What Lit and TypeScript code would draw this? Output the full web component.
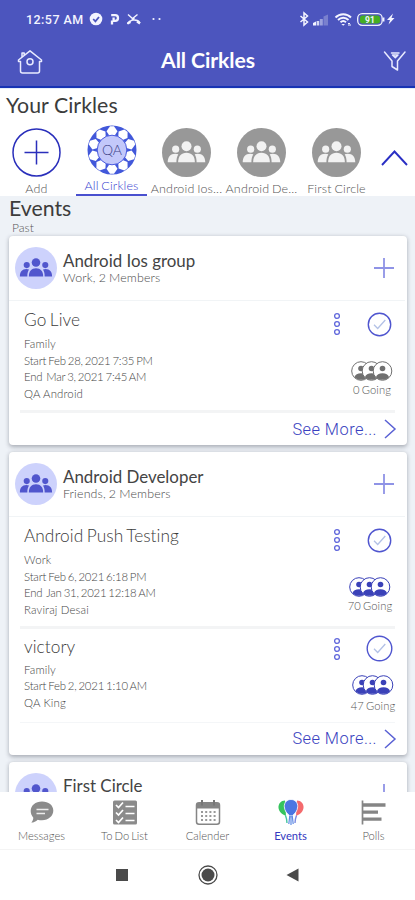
import { LitElement, html, css, svg, nothing } from "lit";
import { customElement, property } from "lit/decorators.js";
import { classMap } from "lit/directives/class-map.js";

interface CirkleEvent {
  title: string;
  category: string;
  start: string;
  end?: string;
  owner: string;
  going: number;
  tone?: string;
}

interface Group {
  name: string;
  info: string;
  events: CirkleEvent[];
}

const groups: Group[] = [
  {
    name: "Android Ios group",
    info: "Work, 2 Members",
    events: [
      { title: "Go Live", category: "Family", start: "Feb 28, 2021 7:35 PM", end: "Mar 3, 2021 7:45 AM", owner: "QA Android", going: 0, tone: "none" },
    ],
  },
  {
    name: "Android Developer",
    info: "Friends, 2 Members",
    events: [
      { title: "Android Push Testing", category: "Work", start: "Feb 6, 2021 6:18 PM", end: "Jan 31, 2021 12:18 AM", owner: "Raviraj Desai", going: 70, tone: "many" },
      { title: "victory", category: "Family", start: "Feb 2, 2021 1:10 AM", owner: "QA King", going: 47, tone: "short" },
    ],
  },
  { name: "First Circle", info: "", events: [] },
];

const people = svg`
  <circle cx="24" cy="17.8" r="4.9"/>
  <circle cx="13.4" cy="20.7" r="3.5"/>
  <circle cx="34.6" cy="20.7" r="3.5"/>
  <path d="M15.8 33.6c0-6 3-9.4 8.2-9.4s8.2 3.4 8.2 9.4z"/>
  <path d="M5.6 33.6c0-5.2 2.6-8.4 7.4-8.4 1.2 0 2.2.2 3 .6-1.3 2-1.9 4.6-1.9 7.8z"/>
  <path d="M42.4 33.6c0-5.2-2.6-8.4-7.4-8.4-1.2 0-2.2.2-3 .6 1.3 2 1.9 4.6 1.9 7.8z"/>`;

@customElement("status-bar")
export class StatusBar extends LitElement {
  static styles = css`
    :host { display: flex; height: 38px; align-items: center; padding: 0 16px 0 26px; color: #f3f4ff; font: 500 12.5px Roboto, sans-serif; }
    .time { letter-spacing: 0.45px; margin-right: 5px; }
    .grow { flex: 1; }
    svg { display: block; }
  `;
  render() {
    return html`
      <span class="time">12:57 AM</span>
      <svg width="80" height="16" viewBox="0 0 80 16" fill="none" stroke="#f3f4ff">
        <circle cx="7" cy="8" r="6.3" fill="#f3f4ff" stroke="none"/>
        <path d="M4.2 8l2.2 2.3L10 6" stroke="#4c55be" stroke-width="1.8"/>
        <path d="M23 13.5V9.500M22.200 4.200h4a2.700 2.700 0 0 1 0 5.600h-1.600V6.500" stroke-width="2.300"/>
        <path d="M39 3.500l4.500 4 5-4M38.500 13c1.500-4.500 10-5.500 12.500-1M45.500 7l-5 4" stroke-width="1.400"/>
        <path d="M38.500 12.500l3-1.500M48 10.500l3 2" stroke-width="2.200"/>
        <circle cx="64.500" cy="8" r="1.100" fill="#f3f4ff" stroke="none"/>
        <circle cx="70.500" cy="8" r="1.100" fill="#f3f4ff" stroke="none"/>
      </svg>
      <span class="grow"></span>
      <svg width="100" height="16" viewBox="0 0 100 16" fill="none" stroke="#f3f4ff">
        <path d="M1.500 5l7 6L5 14V2l3.500 3-7 6" stroke-width="1.500"/>
        <path d="M14 14.500v-2.500l3-1.500v4z" fill="#f3f4ff" stroke="none"/>
        <path d="M17.600 10h2.600v4.500h-2.600z" fill="#d5d8f5" stroke="none"/>
        <path d="M20.800 8h3v6.500h-3z" fill="#9ba1dd" stroke="none"/>
        <path d="M24.500 5.500l4.500-2v11h-4.500z" fill="#7980ce" stroke="none"/>
        <path d="M36.500 6.500c4.200-4.300 11.300-4.300 15.500 0M39 9c3-3 7.500-3 10.500 0M41.500 11.300c1.600-1.500 3.900-1.500 5.500 0" stroke-width="1.900"/>
        <path d="M44.200 14.800l-1.800-1.900h3.600z" fill="#f3f4ff" stroke="none"/>
        <path d="M49 12.500h2M49 14h3" stroke-width="1"/>
        <rect x="58.700" y="2.700" width="24.500" height="11.600" rx="4.500" stroke-width="1.300"/>
        <rect x="61" y="4.500" width="20" height="8" rx="2.500" fill="#45ae23" stroke="none"/>
        <path d="M84.700 6.500v4" stroke-width="1.500"/>
        <text x="71" y="11.600" text-anchor="middle" font-size="8.500" font-weight="700" fill="#f3f4ff" stroke="none">91</text>
        <path d="M94 2.500l-6 6.500h3l-1.500 4.500 6-6.500h-3z" fill="#f3f4ff" stroke="none"/>
      </svg>`;
  }
}

@customElement("title-bar")
export class TitleBar extends LitElement {
  static styles = css`
    :host { display: flex; height: 48px; align-items: center; justify-content: space-between; padding: 0 8px 0 17px; border-bottom: 2px solid #1733b4; color: #fff; font: 700 21.2px Lato, sans-serif; }
    svg { display: block; fill: none; stroke: #e9ebff; stroke-width: 1.5; }
    h1 { font: inherit; margin: 0 0 4px -10px; letter-spacing: -0.1px; }
    .funnel { margin-top: -3px; }
  `;
  render() {
    return html`
      <svg width="26" height="26" viewBox="0 0 26 26" stroke-linejoin="round" stroke-linecap="round">
        <path d="M1.500 11L13 1.800 24.500 11M1.500 11v1.500h2V22a2 2 0 0 0 2 2h15a2 2 0 0 0 2-2v-9.500h2V11M5 8V4h2.200v2.300"/>
        <circle cx="13" cy="12.700" r="3"/>
      </svg>
      <h1>All Cirkles</h1>
      <svg class="funnel" width="24" height="24" viewBox="0 0 24 24" stroke-linejoin="round" stroke-linecap="round">
        <path d="M1.500 3l7.500 9v5.500l5.500 3.500v-9L22 3M9.500 6h5.500l-2.700 2.600zM8.500 4h7.500"/>
      </svg>`;
  }
}

@customElement("cirkle-strip")
export class CirkleStrip extends LitElement {
  static styles = css`
    :host { display: block; height: 107px; background: #fff; font-family: Lato, sans-serif; overflow: hidden; }
    h2 { margin: 0; padding: 3px 0 0 6px; height: 29px; font-size: 21.3px; line-height: 26px; font-weight: 400; color: #3c3c3c; white-space: nowrap; letter-spacing: 0.05px; }
    .row { display: flex; margin-left: -1px; }
    .item { width: 75px; flex: none; height: 75px; display: flex; flex-direction: column; align-items: center; padding-top: 7px; box-sizing: border-box; }
    .item svg { display: block; flex: none; }
    .label { font-size: 12.5px; line-height: 16px; margin-top: 4px; color: #555; font-weight: 300; white-space: nowrap; letter-spacing: 0.15px; word-spacing: -0.8px; }
    .active { padding-top: 4px; height: 74px; }
    .active .label { color: #353dcf; width: 71px; text-align: center; height: 18px; border-bottom: 2px solid #4950cf; box-sizing: content-box; margin-top: 3px; }
    .up { margin: 28px 0 0 5px; display: block; }
    text { font-family: Lato, sans-serif; font-weight: 300; }
  `;
  private item(label: string) {
    return html`<div class="item">
      <svg width="49" height="49" viewBox="0 0 48 48"><circle cx="24" cy="24" r="24" fill="#989898"/><g fill="#f2f2f2">${people}</g></svg>
      <span class="label">${label}</span>
    </div>`;
  }
  render() {
    const spots = Array.from({ length: 10 }, (_, i) => i * 36);
    return html`
      <h2>Your Cirkles</h2>
      <div class="row">
        <div class="item">
          <svg width="49" height="49" viewBox="0 0 49 49" fill="none" stroke="#2a2fbb" stroke-width="1.500">
            <circle cx="24.500" cy="24.500" r="23.500"/><path d="M24.500 12.500v24M12.500 24.500h24"/>
          </svg>
          <span class="label">Add</span>
        </div>
        <div class="item active">
          <svg width="50" height="50" viewBox="0 0 50 50">
            <circle cx="25" cy="25" r="24.500" fill="#4258da"/>
            ${spots.map((a) => svg`<path d="M23 1.200h4l3.500 5-2.800 4.400h-5.400l-2.800-4.400z" fill="#fff" transform="rotate(${a} 25 25)"/>`)}
            <circle cx="25" cy="25" r="14.800" fill="#c3c8fa" stroke="#4d5de0"/>
            <text x="25" y="30" text-anchor="middle" font-size="14" fill="#3f4488">QA</text>
          </svg>
          <span class="label">All Cirkles</span>
        </div>
        ${["Android Ios...", "Android De...", "First Circle"].map((l) => this.item(l))}
        <svg class="up" width="30" height="18" viewBox="0 0 30 18" fill="none" stroke="#2a2fc4" stroke-width="1.900"><path d="M3 16L15.500 2.500 28 16"/></svg>
      </div>`;
  }
}

@customElement("event-row")
export class EventRow extends LitElement {
  static properties = { event: { attribute: false } };
  declare event: CirkleEvent;
  static styles = css`
    :host { display: block; font-family: Lato, sans-serif; }
    .row { display: flex; justify-content: space-between; height: 109px; padding: 8px 0 0 15px; box-sizing: border-box; }
    .title { font-size: 17.3px; line-height: 22px; height: 27px; color: #3c3c3c; font-weight: 300; letter-spacing: 0.05px; word-spacing: -1.2px; }
    .line { font-size: 11.4px; line-height: 16.6px; color: #444; font-weight: 300; white-space: pre; letter-spacing: 0.15px; }
    .date { letter-spacing: -0.2px; word-spacing: -0.9px; }
    .short { height: 92.5px; padding-top: 7px; }
    .short .title { height: 25.5px; }
    .side { width: 75px; display: flex; flex-direction: column; }
    .actions { display: flex; justify-content: space-between; align-items: center; height: 26px; padding: 2px 14px 0 0; }
    .short .actions { padding-top: 0; margin-top: -0.5px; }
    svg { display: block; }
    .dots { margin-left: 1px; }
    .going { display: flex; flex-direction: column; align-items: center; width: 46px; margin: 24px 0 0 17px; align-self: flex-start; }
    .many .going { margin-left: 15px; }
    .short .going { margin: 13px 0 0 18px; }
    .count { font-size: 11.2px; line-height: 14px; margin-top: 2px; color: #555; font-weight: 300; letter-spacing: 0.1px; word-spacing: -1px; white-space: nowrap; }
    .short .count { margin-top: 4px; }
  `;
  render() {
    const e = this.event;
    const c = e.going ? "#3a41b8" : "#707070";
    const r = e.tone === "short" ? 12.3 : 11.2;
    return html`<div class=${classMap({ row: true, [e.tone ?? "none"]: true })}>
      <div>
        <div class="title">${e.title}</div>
        <div class="line">${e.category}</div>
        <div class="line date">Start ${e.start}</div>
        ${e.end ? html`<div class="line date">End  ${e.end}</div>` : nothing}
        <div class="line">${e.owner}</div>
      </div>
      <div class="side">
        <div class="actions">
          <svg class="dots" width="8" height="24" viewBox="0 0 8 24" fill="none" stroke="#6168dc" stroke-width="1.300">
            <circle cx="4" cy="4" r="2.400"/><circle cx="4" cy="12" r="2.400"/><circle cx="4" cy="20" r="2.400"/>
          </svg>
          <svg width="27" height="27" viewBox="0 0 27 27" fill="none">
            <circle cx="13.500" cy="13.500" r=${r} stroke="#4f55cf" stroke-width="1.400"/>
            <path d="M8 13.800l3.700 3.700 7.600-8.500" stroke="#b3c1e6" stroke-width="1.300"/>
          </svg>
        </div>
        <div class="going">
          <svg width="42" height="20" viewBox="0 0 42 20">
            ${[10, 20.5, 31.5].map((x) => svg`
              <circle cx=${x} cy="10" r="9.300" fill="#fff" stroke=${c}/>
              <circle cx=${x} cy="7.500" r="2.800" fill=${c}/>
              <path d="M${x - 6.6} 16.200c.8-2.800 3.200-4 6.600-4s5.800 1.200 6.600 4c-3.600 3.400-9.600 3.400-13.200 0z" fill=${c}/>`)}
          </svg>
          <span class="count">${e.going} Going</span>
        </div>
      </div>
    </div>`;
  }
}

@customElement("group-card")
export class GroupCard extends LitElement {
  @property({ attribute: false }) declare group: Group;
  static styles = css`
    :host { display: block; flex: none; background: #fff; border-radius: 4px; box-shadow: 0 1.5px 4px rgba(60, 65, 80, 0.4); font-family: Lato, sans-serif; }
    .head { display: flex; align-items: center; height: 64px; padding: 0 11px 0 6px; border-bottom: 1px solid #f1f4f6; margin: 0 2px 0 0; }
    .text { flex: 1; margin-left: 6px; }
    .name { font-size: 16.9px; line-height: 20px; color: #444; white-space: nowrap; }
    .info { font-size: 12.4px; line-height: 14px; height: 14px; color: #4a4a4a; font-weight: 300; letter-spacing: 0.15px; word-spacing: -0.5px; margin-bottom: 1px; }
    svg { display: block; }
    .plus { margin-right: -1px; }
    .rule { height: 3px; background: #f3f4f5; margin: 0 12px 0 11px; }
    .rule.thin { height: 1px; background: #f4f6f8; }
    .more { display: flex; align-items: center; justify-content: flex-end; height: 32px; padding-right: 10px; gap: 6px; color: #3a3fc0; font: 300 16.4px Roboto, sans-serif; letter-spacing: 0.45px; }
  `;
  render() {
    const g = this.group;
    return html`
      <div class="head">
        <svg width="42" height="42" viewBox="0 0 48 48"><circle cx="24" cy="24" r="24" fill="#cdd2fc"/><g fill="#5156cd">${people}</g></svg>
        <div class="text"><div class="name">${g.name}</div><div class="info">${g.info}</div></div>
        <svg class="plus" width="22" height="22" viewBox="0 0 22 22" stroke="#8f93e6" stroke-width="1.800"><path d="M11 1v20M1 11h20"/></svg>
      </div>
      ${g.events.map((e, i) => html`<event-row .event=${e}></event-row>
        <div class=${classMap({ rule: true, thin: i > 0 })}></div>`)}
      ${g.events.length ? html`<div class="more">See More...
        <svg width="14" height="20" viewBox="0 0 14 20" fill="none" stroke="#5a61d4" stroke-width="1.500"><path d="M2 1l10 9L2 19"/></svg></div>` : nothing}`;
  }
}

@customElement("tab-bar")
export class TabBar extends LitElement {
  static styles = css`
    :host { display: flex; height: 58px; background: #fff; border-bottom: 1px solid #f4f4f4; font-family: Lato, sans-serif; box-sizing: border-box; }
    .tab { width: 83px; display: flex; flex-direction: column; align-items: center; padding-top: 7px; color: #555; font-weight: 300; font-size: 11.2px; line-height: 14px; gap: 2px; word-spacing: -1px; }
    .tab svg { display: block; width: 28px; height: 28px; }
    .on { color: #3339c0; font-weight: 400; }
  `;
  render() {
    return html`
      <div class="tab"><svg viewBox="0 0 28 28"><path d="M14 2.500c6.600 0 11.300 3.800 11.300 9S20.600 21.300 14 21.300c-1.600 0-3-.2-4.300-.6-1.800 1.600-4 2.900-6.400 2.900 1.300-1.500 2-3 2-4.900C3.600 16.600 2.700 14.200 2.700 12 2.700 6.500 7.400 2.500 14 2.500z" fill="#8b8b8b"/><path d="M8.500 10.500h12M8.500 14.500h8.500" stroke="#ededed" stroke-width="1.600"/></svg>Messages</div>
      <div class="tab"><svg viewBox="0 0 28 28"><rect x="2" y="1.500" width="24" height="24" rx="1.500" fill="#8b8b8b"/><path d="M5 6l2.500 2.500L12 3.500M5 13.500l2.500 2.500 4.500-5M5 21l2.500 2.500 4.500-5M14.500 7.500h9M14.500 14.500h9M14.500 21.500h9" fill="none" stroke="#fff" stroke-width="1.700"/></svg>To Do List</div>
      <div class="tab"><svg viewBox="0 0 28 28"><rect x="2.500" y="3.700" width="23" height="21.500" rx="2.500" fill="#fff" stroke="#858585" stroke-width="1.500"/><path d="M2.500 9.500V6a2 2 0 0 1 2-2h19a2 2 0 0 1 2 2v3.500z" fill="#858585"/><path d="M8 1v5.500M20 1v5.500" stroke="#777" stroke-width="2"/><path d="M7 13h15M7 17h15M7 21h15" stroke="#999" stroke-width="1.800" stroke-dasharray="2 2.200"/></svg>Calender</div>
      <div class="tab on"><svg viewBox="0 0 28 28" fill="none"><path d="M8 1.500C4 1.500 1 5 1.500 9c.5 3.600 3.300 6.500 7.500 8z" fill="#35c45d"/><path d="M20 1.500c4 0 7 3.500 6.500 7.500-.5 3.600-3.300 6.500-7.500 8z" fill="#f46a6d"/><path d="M8.500 16.500c1 2.500 1.500 4 1.500 7.500" stroke="#45c5a0" stroke-width="1.400"/><path d="M19.500 16.500c-1 2.500-1.500 4-1.500 7.500" stroke="#7a8be0" stroke-width="1.400"/><path d="M14 .5c4.200 0 6.900 3 6.700 7.300-.2 4-2.800 7-5.200 8.700h-3c-2.400-1.700-5-4.700-5.200-8.700C7.100 3.500 9.800.5 14 .5z" fill="#4b76e2" stroke="#fff" stroke-width=".8"/><path d="M12.800 16.500l-1 8.500M14 16.500V26M15.200 16.500l1 8.500" stroke="#5f8be5" stroke-width="1.200"/></svg>Events</div>
      <div class="tab"><svg viewBox="0 0 28 28" fill="none" stroke="#858585"><path d="M2.500 1.500v24" stroke-width="1.700"/><path d="M3 6h22.500M3 13.200h15M3 20.200h18.500" stroke-width="3.300"/></svg>Polls</div>`;
  }
}

@customElement("system-nav")
export class SystemNav extends LitElement {
  static styles = css`
    :host { display: flex; height: 50px; background: #fff; align-items: center; justify-content: center; gap: 65px; box-sizing: border-box; }
    svg { display: block; }
  `;
  render() {
    return html`
      <svg width="20" height="22" viewBox="0 0 20 22"><rect x="4" y="5" width="12" height="12" fill="#4a4a4a"/></svg>
      <svg width="22" height="22" viewBox="0 0 22 22"><circle cx="11" cy="11" r="9" fill="none" stroke="#4a4a4a" stroke-width="1.300"/><circle cx="11" cy="11" r="6.500" fill="#4a4a4a"/></svg>
      <svg width="20" height="22" viewBox="0 0 20 22"><path d="M2.500 11l12-6.500v13z" fill="#4a4a4a"/></svg>`;
  }
}

@customElement("app-root")
export class AppRoot extends LitElement {
  static styles = css`
    :host { display: flex; flex-direction: column; width: 415px; height: 900px; overflow: hidden; background: #eef2f7; font-family: Lato, sans-serif; }
    header { background: #4c55be; border-bottom: 1px solid #e4edfb; flex: none; }
    cirkle-strip, tab-bar, system-nav { flex: none; }
    main { flex: 1; min-height: 0; overflow: hidden; display: flex; flex-direction: column; gap: 7px; padding: 0 8px 0 9px; }
    .heading { height: 33px; flex: none; }
    h2 { margin: 0; font-size: 21.3px; line-height: 25px; height: 25px; font-weight: 400; color: #3c3c3c; }
    .past { font-size: 12px; line-height: 14px; color: #555; font-weight: 300; padding-left: 3px; }
  `;
  render() {
    return html`
      <header><status-bar></status-bar><title-bar></title-bar></header>
      <cirkle-strip></cirkle-strip>
      <main>
        <div class="heading"><h2>Events</h2><div class="past">Past</div></div>
        ${groups.map((g) => html`<group-card .group=${g}></group-card>`)}
      </main>
      <tab-bar></tab-bar>
      <system-nav></system-nav>`;
  }
}
